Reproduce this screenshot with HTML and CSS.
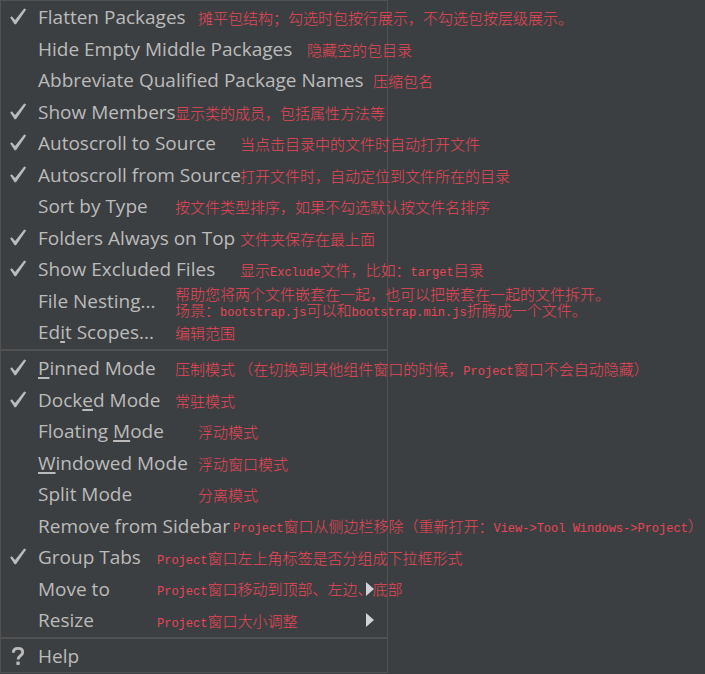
FILE: index.html
```html
<!DOCTYPE html>
<html lang="zh-CN">
<head>
<meta charset="utf-8">
<title>Project 窗口选项</title>
<link rel="stylesheet" href="styles.css">
</head>
<body>
<svg class="defs" aria-hidden="true">
  <symbol id="check" viewBox="0 0 18 20"><path d="M1.2 10.4 2.8 9.2 6.1 12.9 15.2 1.6 17.2 2.6 7 17.2 5.6 17.2z" fill="currentColor"/></symbol>
  <symbol id="help" viewBox="0 0 18 20"><path d="M4.3 6.8C4.3 3.3 6.2 2.4 9 2.4s4.7 1.3 4.7 3.9c0 3.4-4.6 3.4-4.6 7.2" fill="none" stroke="currentColor" stroke-width="2.9"/><path d="M7.4 15.6h3.3v3.3H7.4z" fill="currentColor"/></symbol>
  <symbol id="arrow" viewBox="0 0 8 14"><path d="M0 0 8 7 0 14z" fill="currentColor"/></symbol>
</svg>
<main class="menu" role="menu">
  <div class="group" role="group">
    <button class="item" role="menuitemcheckbox" aria-checked="true"><svg class="icon"><use href="#check"/></svg><span class="label stop-c">Flatten Packages</span><span class="note">摊平包结构；勾选时包按行展示，不勾选包按层级展示。</span></button>
    <button class="item" role="menuitemcheckbox" aria-checked="false"><span class="icon"></span><span class="label stop-f">Hide Empty Middle Packages</span><span class="note">隐藏空的包目录</span></button>
    <button class="item" role="menuitemcheckbox" aria-checked="false"><span class="icon"></span><span class="label stop-g">Abbreviate Qualified Package Names</span><span class="note">压缩包名</span></button>
    <button class="item" role="menuitemcheckbox" aria-checked="true"><svg class="icon"><use href="#check"/></svg><span class="label stop-b">Show Members</span><span class="note">显示类的成员，包括属性方法等</span></button>
    <button class="item" role="menuitemcheckbox" aria-checked="true"><svg class="icon"><use href="#check"/></svg><span class="label stop-e">Autoscroll to Source</span><span class="note">当点击目录中的文件时自动打开文件</span></button>
    <button class="item" role="menuitemcheckbox" aria-checked="true"><svg class="icon"><use href="#check"/></svg><span class="label stop-e">Autoscroll from Source</span><span class="note">打开文件时，自动定位到文件所在的目录</span></button>
    <button class="item" role="menuitemcheckbox" aria-checked="false"><span class="icon"></span><span class="label stop-b">Sort by Type</span><span class="note">按文件类型排序，如果不勾选默认按文件名排序</span></button>
    <button class="item" role="menuitemcheckbox" aria-checked="true"><svg class="icon"><use href="#check"/></svg><span class="label stop-e">Folders Always on Top</span><span class="note">文件夹保存在最上面</span></button>
    <button class="item" role="menuitemcheckbox" aria-checked="true"><svg class="icon"><use href="#check"/></svg><span class="label stop-e">Show Excluded Files</span><span class="note">显示<span class="latin">Exclude</span>文件，比如：<span class="latin">target</span>目录</span></button>
    <button class="item" role="menuitem"><span class="icon"></span><span class="label stop-b">File Nesting...</span><span class="note"><span class="line">帮助您将两个文件嵌套在一起，也可以把嵌套在一起的文件拆开。</span><span class="line">场景：<span class="latin">bootstrap.js</span>可以和<span class="latin">bootstrap.min.js</span>折腾成一个文件。</span></span></button>
    <button class="item" role="menuitem"><span class="icon"></span><span class="label stop-b">Ed<u>i</u>t Scopes...</span><span class="note">编辑范围</span></button>
  </div>
  <div class="group" role="group">
    <button class="item" role="menuitemcheckbox" aria-checked="true"><svg class="icon"><use href="#check"/></svg><span class="label stop-b"><u>P</u>inned Mode</span><span class="note">压制模式 （在切换到其他组件窗口的时候，<span class="latin">Project</span>窗口不会自动隐藏）</span></button>
    <button class="item" role="menuitemcheckbox" aria-checked="true"><svg class="icon"><use href="#check"/></svg><span class="label stop-b">Dock<u>e</u>d Mode</span><span class="note">常驻模式</span></button>
    <button class="item" role="menuitemcheckbox" aria-checked="false"><span class="icon"></span><span class="label stop-c">Floating <u>M</u>ode</span><span class="note">浮动模式</span></button>
    <button class="item" role="menuitemcheckbox" aria-checked="false"><span class="icon"></span><span class="label stop-c"><u>W</u>indowed Mode</span><span class="note">浮动窗口模式</span></button>
    <button class="item" role="menuitemcheckbox" aria-checked="false"><span class="icon"></span><span class="label stop-c">Split Mode</span><span class="note">分离模式</span></button>
    <button class="item" role="menuitem"><span class="icon"></span><span class="label stop-d">Remove from Sidebar</span><span class="note"><span class="latin">Project</span>窗口从侧边栏移除（重新打开：<span class="latin">View-&gt;Tool Windows-&gt;Project</span>）</span></button>
    <button class="item" role="menuitemcheckbox" aria-checked="true"><svg class="icon"><use href="#check"/></svg><span class="label stop-a">Group Tabs</span><span class="note"><span class="latin">Project</span>窗口左上角标签是否分组成下拉框形式</span></button>
    <button class="item" role="menuitem" aria-haspopup="true"><span class="icon"></span><span class="label stop-a">Move to</span><span class="note"><span class="latin">Project</span>窗口移动到顶部、左边、底部</span><svg class="arrow"><use href="#arrow"/></svg></button>
    <button class="item" role="menuitem" aria-haspopup="true"><span class="icon"></span><span class="label stop-a">Resize</span><span class="note"><span class="latin">Project</span>窗口大小调整</span><svg class="arrow"><use href="#arrow"/></svg></button>
  </div>
  <div class="group" role="group">
    <button class="item" role="menuitem"><svg class="icon"><use href="#help"/></svg><span class="label">Help</span></button>
  </div>
</main>
</body>
</html>
```
FILE: styles.css
```css
* {
  box-sizing: border-box;
}

body {
  margin: 0;
  background: #3c3f41;
}

.defs {
  position: absolute;
  width: 0;
  height: 0;
}

.menu {
  width: 55%;
  border: 1px solid #515151;
}

.group + .group {
  margin-top: 1px;
  padding-top: 1px;
  border-top: 2px solid #515151;
}

.item {
  position: relative;
  display: flex;
  align-items: center;
  width: 100%;
  height: 32px;
  padding: 0;
  border: 0;
  background: none;
  color: #bbbbbb;
  font: 19px/26px "Open Sans", "Noto Sans", sans-serif;
  text-align: left;
  white-space: nowrap;
}

.item:nth-child(even) {
  height: 31px;
}

.icon {
  flex: none;
  width: 18px;
  height: 20px;
  margin: 0 11px 0 8px;
}

.label {
  flex: none;
}

.label u {
  text-decoration-thickness: 2px;
  text-underline-offset: 2px;
  text-decoration-skip-ink: none;
}

/* Columns where the annotations start */
.stop-a { width: 119px; }
.stop-b { width: 137px; }
.stop-c { width: 160px; }
.stop-d { width: 195px; }
.stop-e { width: 202px; }
.stop-f { width: 269px; }
.stop-g { width: 335px; }

.note {
  padding-top: 2px;
  color: #e84658;
  font: 300 15px/16px "Noto Sans CJK SC", sans-serif;
}

.line {
  display: block;
  height: 16px;
}

.latin {
  font-family: "Liberation Mono", monospace;
  font-size: 12px;
  line-height: 1;
}

.arrow {
  position: absolute;
  right: 13px;
  width: 8px;
  height: 14px;
  color: #d0d2d6;
}
```
